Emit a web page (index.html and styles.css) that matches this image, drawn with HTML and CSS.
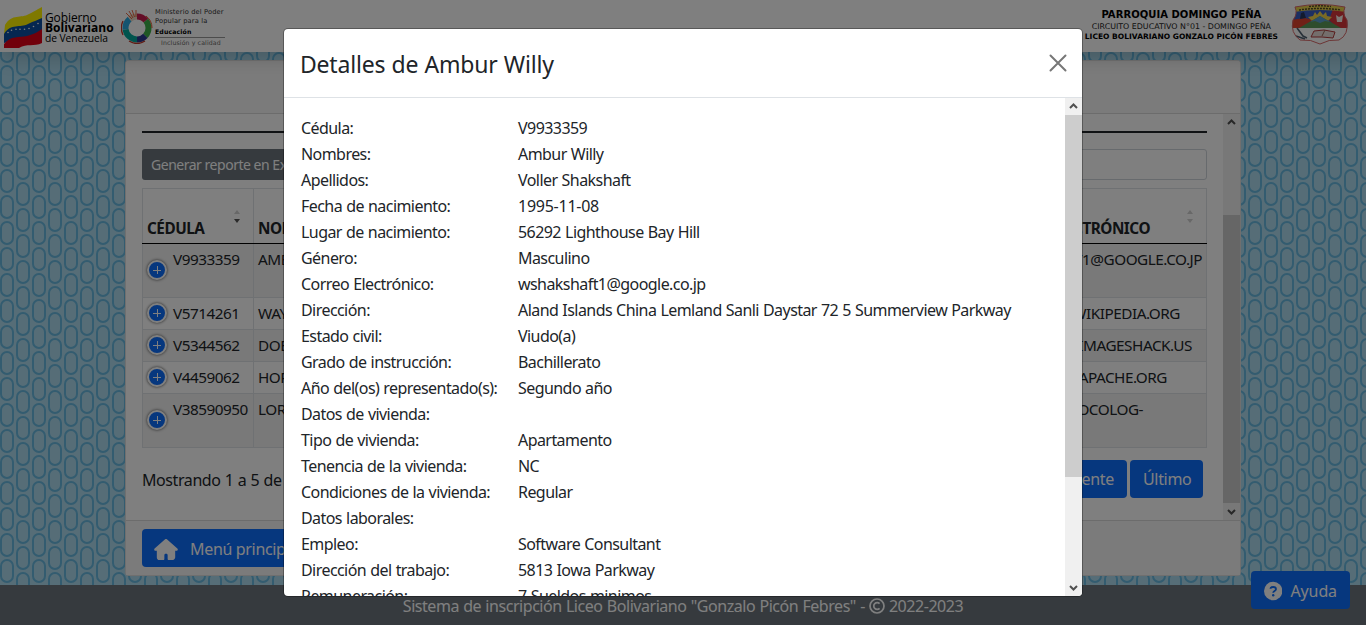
FILE: index.html
```html
<!DOCTYPE html>
<html lang="es">
<head>
<meta charset="utf-8">
<title>Detalles de Ambur Willy</title>
<link rel="stylesheet" href="styles.css">
</head>
<body>
<div class="page">
  <header class="topbar">
    <div class="brand">
      <svg class="flag" width="38" height="42" viewBox="0 0 38 42">
        <path fill="#fff200" d="M1 19C8 7 17 13 25 8C31 5 34 3 38 1V17C28 18 20 20 12 22L0 28Z"/>
        <path fill="#0b4ea2" d="M0 28C7 17 16 22 24 18C30 15 34 14 38 12V28L18 32L0 37Z"/>
        <path fill="#e30016" d="M0 38C7 29 15 32 23 30C30 28 34 26 38 23V37C30 41 23 37 15 42H0Z"/>
        <g fill="#fff"><circle cx="4" cy="26.5" r=".8"/><circle cx="7.500" cy="24.200" r=".8"/><circle cx="12" cy="23.200" r=".8"/><circle cx="16" cy="23.200" r=".8"/><circle cx="20.500" cy="23.200" r=".8"/><circle cx="25" cy="22.500" r=".8"/><circle cx="29.500" cy="20.500" r=".8"/><circle cx="34" cy="17.500" r=".8"/></g>
      </svg>
      <div class="gov"><span class="g1">Gobierno</span><b class="g2">Bolivariano</b><span class="g3">de Venezuela</span></div>
      <svg class="ring" width="32" height="34" viewBox="0 0 32 34">
        <g fill="none" stroke-width="6" transform="rotate(-90 16 18)">
          <circle cx="16" cy="18" r="11.500" stroke="#c81d4e" pathLength="100" stroke-dasharray="14 86"/>
          <circle cx="16" cy="18" r="11.500" stroke="#3fae49" pathLength="100" stroke-dasharray="23 77" stroke-dashoffset="-14"/>
          <circle cx="16" cy="18" r="11.500" stroke="#2b3990" pathLength="100" stroke-dasharray="13 87" stroke-dashoffset="-37"/>
          <circle cx="16" cy="18" r="11.500" stroke="#00a99d" pathLength="100" stroke-dasharray="23 77" stroke-dashoffset="-50"/>
          <circle cx="16" cy="18" r="11.500" stroke="#2ba9e0" pathLength="100" stroke-dasharray="16 84" stroke-dashoffset="-73"/>
          <circle cx="16" cy="18" r="11.500" stroke="#e9d8c4" pathLength="100" stroke-dasharray="11 89" stroke-dashoffset="-89"/>
        </g>
        <path d="M2 11A16 16 0 0 0 2 25M8 31A15 15 0 0 0 24 31" fill="none" stroke="#c0392b" stroke-width="1.300"/>
        <path d="M25 6A15 15 0 0 1 31 18" fill="none" stroke="#e4572e" stroke-width="1"/>
        <path d="M5 3L11 9M8 1L12 8M11 0L13.500 7M15 0V7" stroke="#e4572e" stroke-width=".9"/>
      </svg>
      <div class="ministry"><span>Ministerio del Poder</span><span>Popular para la</span><b>Educación</b><i>Inclusión y calidad</i></div>
    </div>
    <div class="school">
      <div class="school-text"><b class="s1">PARROQUIA DOMINGO PEÑA</b><span class="s2">CIRCUITO EDUCATIVO N°01 - DOMINGO PEÑA</span><b class="s3">LICEO BOLIVARIANO GONZALO PICÓN FEBRES</b></div>
      <svg class="shield" width="58" height="42" viewBox="0 0 58 42">
        <defs><clipPath id="shieldClip"><path d="M4 4Q29-1 54 4Q51 11 56 17Q58 32 48 37Q38 36 29 41Q20 36 9 37Q-1 30 2 17Q7 11 4 4Z"/></clipPath></defs>
        <g clip-path="url(#shieldClip)">
          <path fill="#fff" d="M0 0H58V42H0Z"/>
          <path fill="#3b5fc4" d="M0 6H58V25H0Z"/>
          <path fill="#e0432f" d="M0 17L14 15L22 17L10 25H0Z"/>
          <path fill="#d9363a" d="M42 6H58V25H46L38 17Z"/>
          <path fill="#f4d54a" d="M22 13L24 9L26 12L29 8L32 12L35 9L36 13L41 14L37 18H21L17 14Z"/>
          <path fill="#5d9b5a" d="M8 25L29 13L50 25Z"/>
          <path fill="#5a9fd0" d="M19 19L29 13L39 19L34 18L29 20L24 18Z"/>
          <path fill="#e9d24c" d="M2 3Q29-3 56 3V9Q29 5 2 9Z"/>
          <path fill="#f7f3ea" d="M45 12L48 14L52 12L51 19L46 19Z"/>
          <path fill="#26365f" d="M10 10L13 9L15 15L9 16Z"/>
        </g>
        <path d="M8 7Q29 4 50 7M18 3.500Q29 2 40 3.500" fill="none" stroke="#554b22" stroke-width="1.500" stroke-dasharray="2 1"/>
        <path d="M6 25L12 33L16 35M5 33L14 36" fill="none" stroke="#506071" stroke-width="1.600"/>
        <path d="M23 28L33 27L44 29L42 35L31 34L20 34Z" fill="#e8dcd8" stroke="#b43b3b"/>
        <path d="M34 27L31 33" stroke="#965"/>
        <path d="M4 4Q29-1 54 4Q51 11 56 17Q58 32 48 37Q38 36 29 41Q20 36 9 37Q-1 30 2 17Q7 11 4 4Z" fill="none" stroke="#d96a6a"/>
      </svg>
    </div>
  </header>

  <main class="content">
    <svg class="pattern" width="1366" height="573" aria-hidden="true">
      <defs><pattern id="pills" width="32" height="26" patternUnits="userSpaceOnUse">
        <g fill="none" stroke="#66b8e0" stroke-width="2">
          <rect x="17" y="1" width="12" height="22" rx="6"/>
          <rect x="1" y="14" width="12" height="22" rx="6"/>
          <rect x="1" y="-12" width="12" height="22" rx="6"/>
        </g></pattern></defs>
      <rect width="1366" height="573" fill="url(#pills)"/>
    </svg>
    <section class="card">
      <div class="card-header"></div>
      <div class="card-body">
        <div class="scroll-area">
          <div class="rule"></div>
          <div class="tools"><button class="btn-export">Generar reporte en Excel</button><div class="search"></div></div>
          <table class="data">
            <colgroup><col class="c1"><col class="c2"><col class="c3"></colgroup>
            <tr class="head"><th><div class="th"><span class="w-ced">CÉDULA</span><span class="sort asc"></span></div></th><th>NOMBRES</th><th><div class="th"><span class="push">CORREO ELECTRÓNICO</span><span class="sort"></span></div></th></tr>
            <tr class="odd r54"><td><div class="id low"><i class="plus"></i><span>V9933359</span></div></td><td>AMBUR WILLY</td><td class="mail m1">WSHAKSHAFT1@GOOGLE.CO.JP</td></tr>
            <tr class="r32"><td><div class="id"><i class="plus"></i><span>V5714261</span></div></td><td>WAY</td><td class="mail m2">WIKIPEDIA.ORG</td></tr>
            <tr class="odd r32"><td><div class="id"><i class="plus"></i><span>V5344562</span></div></td><td>DOE</td><td class="mail m3">IMAGESHACK.US</td></tr>
            <tr class="r32"><td><div class="id"><i class="plus"></i><span>V4459062</span></div></td><td>HOR</td><td class="mail m4">APACHE.ORG</td></tr>
            <tr class="odd r54"><td><div class="id low"><i class="plus"></i><span>V38590950</span></div></td><td>LOR</td><td class="mail m5">OCOLOG-</td></tr>
          </table>
          <div class="pager"><span>Mostrando 1 a 5 de</span><div class="pages"><button class="btn">Siguiente</button><button class="btn last">Último</button></div></div>
        </div>
        <div class="bar bar-card"><svg class="arrow" viewBox="0 0 17 17"><path d="M5 10L8.500 6.500L12 10"/></svg><div class="track-card"></div><div class="thumb-card"></div><svg class="arrow" viewBox="0 0 17 17"><path d="M5 7L8.500 10.500L12 7"/></svg></div>
      </div>
      <div class="card-footer"><button class="btn menu"><svg width="24" height="21" viewBox="0 0 576 512"><path fill="#fff" d="M575.800 255.500c0 18-15 32.100-32 32.100h-32l.7 160.200c0 35-28 64.200-56 64.200H352c-18 0-24-14-24-32v-88c0-18-14-32-32-32h-16c-18 0-32 14-32 32v88c0 18-6 32-24 32H120c-30 0-56-28-56-64V287.600H32c-18 0-32-14-32-32.100c0-9 3-17 10-24L266.400 8c7-7 15-8 22-8s15 2 21 7l255.400 224.500c8 7 12 15 11 24z"/></svg><span>Menú principal</span></button></div>
    </section>
  </main>
  <footer class="footer"><span>Sistema de inscripción Liceo Bolivariano "Gonzalo Picón Febres" -</span><svg width="16" height="16" viewBox="0 0 16 16"><circle cx="8" cy="8" r="7" fill="none" stroke="#fff" stroke-width="1.700"/><path d="M10.600 5.600A3.400 3.400 0 1 0 10.600 10.400" fill="none" stroke="#fff" stroke-width="1.700"/></svg><span>2022-2023</span></footer>
  <button class="btn help"><svg width="20" height="20" viewBox="0 0 20 20"><circle cx="10" cy="10" r="10" fill="#fff"/><path d="M7 7.600C7 5.200 13 4.800 13 8C13 10 10 10 10 12" fill="none" stroke="#0d6efd" stroke-width="2"/><circle cx="10" cy="14.600" r="1.300" fill="#0d6efd"/></svg><span>Ayuda</span></button>
</div>

<div class="backdrop">
  <div class="modal" role="dialog">
    <div class="modal-header"><h5>Detalles de Ambur Willy</h5><svg width="18" height="18" viewBox="0 0 18 18"><path d="M1.500 1.500L16.500 16.500M16.500 1.500L1.500 16.500" stroke="#777" stroke-width="2" stroke-linecap="round"/></svg></div>
    <div class="modal-body">
      <dl class="details">
        <dt>Cédula:</dt><dd>V9933359</dd>
        <dt>Nombres:</dt><dd>Ambur Willy</dd>
        <dt>Apellidos:</dt><dd>Voller Shakshaft</dd>
        <dt>Fecha de nacimiento:</dt><dd class="date">1995-11-08</dd>
        <dt>Lugar de nacimiento:</dt><dd>56292 Lighthouse Bay Hill</dd>
        <dt>Género:</dt><dd>Masculino</dd>
        <dt>Correo Electrónico:</dt><dd>wshakshaft1@google.co.jp</dd>
        <dt>Dirección:</dt><dd>Aland Islands China Lemland Sanli Daystar 72 5 Summerview Parkway</dd>
        <dt>Estado civil:</dt><dd>Viudo(a)</dd>
        <dt>Grado de instrucción:</dt><dd>Bachillerato</dd>
        <dt>Año del(os) representado(s):</dt><dd>Segundo año</dd>
        <dt>Datos de vivienda:</dt><dd></dd>
        <dt>Tipo de vivienda:</dt><dd>Apartamento</dd>
        <dt>Tenencia de la vivienda:</dt><dd>NC</dd>
        <dt>Condiciones de la vivienda:</dt><dd>Regular</dd>
        <dt>Datos laborales:</dt><dd></dd>
        <dt>Empleo:</dt><dd>Software Consultant</dd>
        <dt>Dirección del trabajo:</dt><dd>5813 Iowa Parkway</dd>
        <dt>Remuneración:</dt><dd>7 Sueldos minimos</dd>
      </dl>
      <div class="bar"><svg class="arrow" viewBox="0 0 17 17"><path d="M5 10L8.500 6.500L12 10"/></svg><div class="thumb-modal"></div><div class="track-modal"></div><svg class="arrow" viewBox="0 0 17 17"><path d="M5 7L8.500 10.500L12 7"/></svg></div>
    </div>
  </div>
</div>
</body>
</html>
```
FILE: styles.css
```css
* { box-sizing: border-box; }
body { margin: 0; width: 1366px; height: 625px; overflow: hidden; font: 16px/26px "Noto Sans", "Open Sans", sans-serif; letter-spacing: -.56px; word-spacing: .5px; color: #212529; }
button { font: inherit; letter-spacing: inherit; border: 0; color: #fff; white-space: nowrap; }
.page { position: relative; height: 625px; display: flex; flex-direction: column; }

/* Top bar */
.topbar { height: 52px; flex: none; display: flex; justify-content: space-between; background: #fff; box-shadow: 0 8px 16px rgba(0,0,0,.15); z-index: 1; color: #000; word-spacing: 0; }
.brand { display: flex; padding-left: 4px; }
.flag { margin-top: 6px; }
.gov { display: flex; flex-direction: column; margin: 13px 0 0 3px; width: 76px; font: 12px/10px "Open Sans", sans-serif; letter-spacing: -.1px; white-space: nowrap; }
.g2 { font-size: 12px; letter-spacing: 0; }
.g3 { font-size: 10.300px; }
.ring { margin-top: 10px; }
.ministry { display: flex; flex-direction: column; margin: 8px 0 0 2px; font: 6.700px/9.300px "DejaVu Sans", sans-serif; letter-spacing: .13px; color: #333; white-space: nowrap; }
.ministry b { color: #000; font-size: 6.200px; }
.ministry i { font-style: normal; color: #666; border-top: 1px solid #999; padding: 0 4px 0 6px; margin-top: 1px; font-size: 6.200px; }
.school { display: flex; padding-right: 17px; gap: 13px; }
.school-text { display: flex; flex-direction: column; align-items: center; padding-top: 9px; font-family: "DejaVu Sans", sans-serif; letter-spacing: 0; white-space: nowrap; }
.s1 { font-size: 10px; line-height: 12px; }
.s2 { font-size: 7.900px; line-height: 11px; color: #222; }
.s3 { font-size: 7.500px; line-height: 10px; }
.s1 { letter-spacing: .05px; }
.s3 { letter-spacing: .02px; }
.shield { margin-top: 3px; }

/* Content card */
.content { position: relative; height: 533px; flex: none; padding: 8px 125px 9px; background: #acdaee; overflow: hidden; }
.pattern { position: absolute; left: 0; top: 0; }
.card { position: relative; height: 516px; width: 1116px; background: #fff; border: 1px solid rgba(0,0,0,.125); border-radius: 4px; }
.card-header { height: 53px; background: #f7f7f7; border-bottom: 1px solid #d8d8d8; border-radius: 3px 3px 0 0; }
.card-body { height: 407px; display: flex; overflow: hidden; border-bottom: 1px solid #d8d8d8; }
.scroll-area { width: 1097px; padding: 17px 16px 0; }
.rule { height: 2px; background: #212529; width: 1065px; }
.tools { display: flex; justify-content: space-between; width: 1065px; margin-top: 16px; }
.btn-export { height: 31px; width: 180px; border-radius: 3px; background: #6c757d; font-size: 14px; letter-spacing: -.48px; padding: 0 8px 0 9px; text-align: left; }
.search { height: 31px; width: 250px; border: 1px solid #ced4da; border-radius: 3px; }
.data { width: 1065px; margin-top: 8px; border-collapse: collapse; table-layout: fixed; white-space: nowrap; font-size: 15.300px; line-height: 24px; letter-spacing: -.48px; }
.c1 { width: 111px; }
.c2 { width: 704px; }
.data td, .data th { border: 1px solid #dee2e6; padding: 3px 4px 0; text-align: left; vertical-align: top; }
.data tr { height: 32px; }
.data tr.head { height: 55px; }
.data tr.r54 { height: 54px; }
.data th { vertical-align: bottom; padding-bottom: 3px; border-bottom: 1px solid #000; }
.odd { background: #f2f2f2; }
.th { display: flex; justify-content: space-between; align-items: flex-end; }
.push { width: 188px; text-align: right; }
.sort { width: 6px; height: 22px; margin: 0 9px 13px 0; display: flex; flex-direction: column; gap: 5px; padding-top: 5px; }
.sort::before, .sort::after { content: ""; border: 3px solid transparent; border-top: 0; border-bottom: 4px solid #d0d0d0; }
.sort::after { border-bottom: 0; border-top: 4px solid #d0d0d0; }
.sort.asc::after { border-top-color: #555; }
.data td.mail { text-align: right; }
.data td.m2 { padding-right: 26px; }
.data td.m3 { padding-right: 14px; }
.data td.m4 { padding-right: 39px; }
.data td.m5 { padding-right: 63px; }
.id { display: flex; gap: 5px; }
.plus { flex: none; width: 20px; height: 20px; margin-top: 2px; border: 2px solid #fff; border-radius: 50%; box-shadow: 0 0 3px #444; background: linear-gradient(#fff,#fff) center/8px 1px no-repeat, linear-gradient(#fff,#fff) center/1px 8px no-repeat, #0d6efd; }
.id span { margin-left: 1px; }
.low .plus { margin-top: 13px; }
.pager { display: flex; justify-content: space-between; padding: 12px 4px 0 0; width: 1065px; line-height: 40px; letter-spacing: -.42px; }
.pages { display: flex; gap: 3px; }
.btn { height: 38px; border-radius: 4px; background: #0d6efd; padding: 0 13px; line-height: 26px; letter-spacing: -.33px; }
.btn.last { width: 73px; }
.card-footer { height: 54px; padding: 8px 16px; background: #f7f7f7; }
.btn.menu, .btn.help { display: flex; align-items: center; gap: 12px; }
.btn.menu { padding-left: 12px; padding-top: 2px; }
.btn.help { position: absolute; left: 1251px; top: 571px; width: 99px; gap: 8px; padding-top: 2px; letter-spacing: -.1px; }
.footer { flex: 1; background: #6c757d; color: #fff; display: flex; justify-content: center; gap: 4px; padding-top: 8px; letter-spacing: -.45px; }
.footer svg { margin-top: 5px; }

/* Scrollbars */
.bar { width: 17px; flex: none; background: #f0f0f0; display: flex; flex-direction: column; }
.arrow { width: 17px; height: 17px; flex: none; fill: none; stroke: #505050; stroke-width: 2; }
.track-card { height: 84px; }
.thumb-card { height: 288px; background: #cdcdcd; }
.thumb-modal { height: 362px; background: #cdcdcd; }
.track-modal { flex: 1; }

/* Modal */
.backdrop { position: absolute; left: 0; top: 0; width: 1366px; height: 625px; background: rgba(0,0,0,.5); z-index: 5; display: flex; justify-content: center; padding-top: 29px; }
.modal { width: 798px; height: 567px; background: #fff; border-radius: 4px; overflow: hidden; box-shadow: 0 0 0 1px rgba(0,0,0,.3); }
.modal-header { height: 69px; display: flex; justify-content: space-between; align-items: center; padding: 2px 15px 0 16px; border-bottom: 1px solid #dee2e6; }
.modal-header h5 { margin: 0; font-size: 23px; font-weight: 400; letter-spacing: -.2px; line-height: 34px; }
.modal-header svg { margin-bottom: 2px; }
.modal-body { height: 498px; display: flex; overflow: hidden; }
.details { margin: 0; padding: 17px 17px 0; width: 781px; display: grid; grid-template-columns: 217px 1fr; grid-auto-rows: 26px; white-space: nowrap; }
.details dd { margin: 0; }
.details .date { letter-spacing: -.25px; }
```
